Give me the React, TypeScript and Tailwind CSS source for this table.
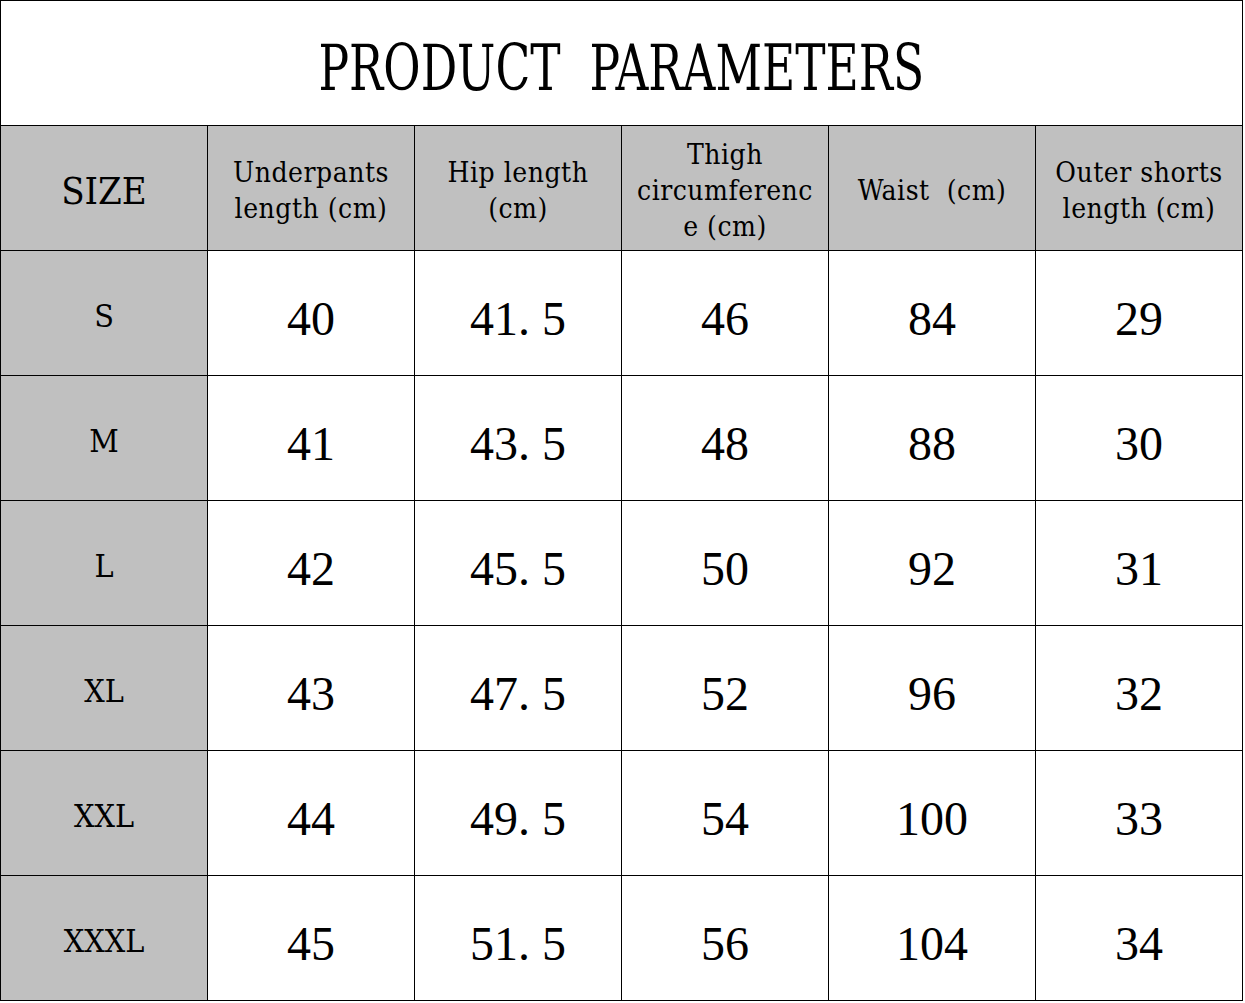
const heads = [
  ["Underpants", "length (cm)"],
  ["Hip length", "(cm)"],
  ["Thigh", "circumferenc", "e (cm)"],
  ["Waist  (cm)"],
  ["Outer shorts", "length (cm)"],
];

const rows = [
  ["S", "40", "41. 5", "46", "84", "29"],
  ["M", "41", "43. 5", "48", "88", "30"],
  ["L", "42", "45. 5", "50", "92", "31"],
  ["XL", "43", "47. 5", "52", "96", "32"],
  ["XXL", "44", "49. 5", "54", "100", "33"],
  ["XXXL", "45", "51. 5", "56", "104", "34"],
];

const cond = "font-['DejaVu_Serif_Condensed','DejaVu_Serif',serif]";
const times = "font-['Liberation_Serif','Times_New_Roman',serif]";

export default function App() {
  return (
    <div className="w-[1245px] h-[1003px] bg-white">
      <div className="w-[1243px] bg-black p-px flex flex-col gap-px">
        <div className="h-[124px] bg-white flex items-center justify-center pt-[10px]">
          <span className={`${cond} inline-block scale-x-[0.79] text-[64px] leading-none text-black whitespace-pre`}>
            PRODUCT  PARAMETERS
          </span>
        </div>

        <div className="grid grid-cols-[repeat(6,206px)] auto-rows-[124px] gap-px">
          <div className={`${cond} bg-[#c0c0c0] flex items-center justify-center pt-[6px] text-[38px] leading-none text-black`}>
            SIZE
          </div>
          {heads.map((h, i) => (
            <div
              key={i}
              className={`${cond} bg-[#c0c0c0] flex flex-col items-center justify-center pt-[6px] text-[28px] leading-[36px] tracking-[0.5px] text-black whitespace-pre`}
            >
              {h.map((line, j) => (
                <span key={j}>{line}</span>
              ))}
            </div>
          ))}

          {rows.map((r) =>
            r.map((v, i) =>
              i === 0 ? (
                <div
                  key={r[0] + i}
                  className={`${cond} bg-[#c0c0c0] flex items-center justify-center pt-[5px] text-[32px] leading-none text-black`}
                >
                  {v}
                </div>
              ) : (
                <div
                  key={r[0] + i}
                  className={`${times} bg-white flex items-center justify-center pt-[12px] text-[48px] leading-none text-black whitespace-pre`}
                >
                  {v}
                </div>
              )
            )
          )}
        </div>
      </div>
    </div>
  );
}
